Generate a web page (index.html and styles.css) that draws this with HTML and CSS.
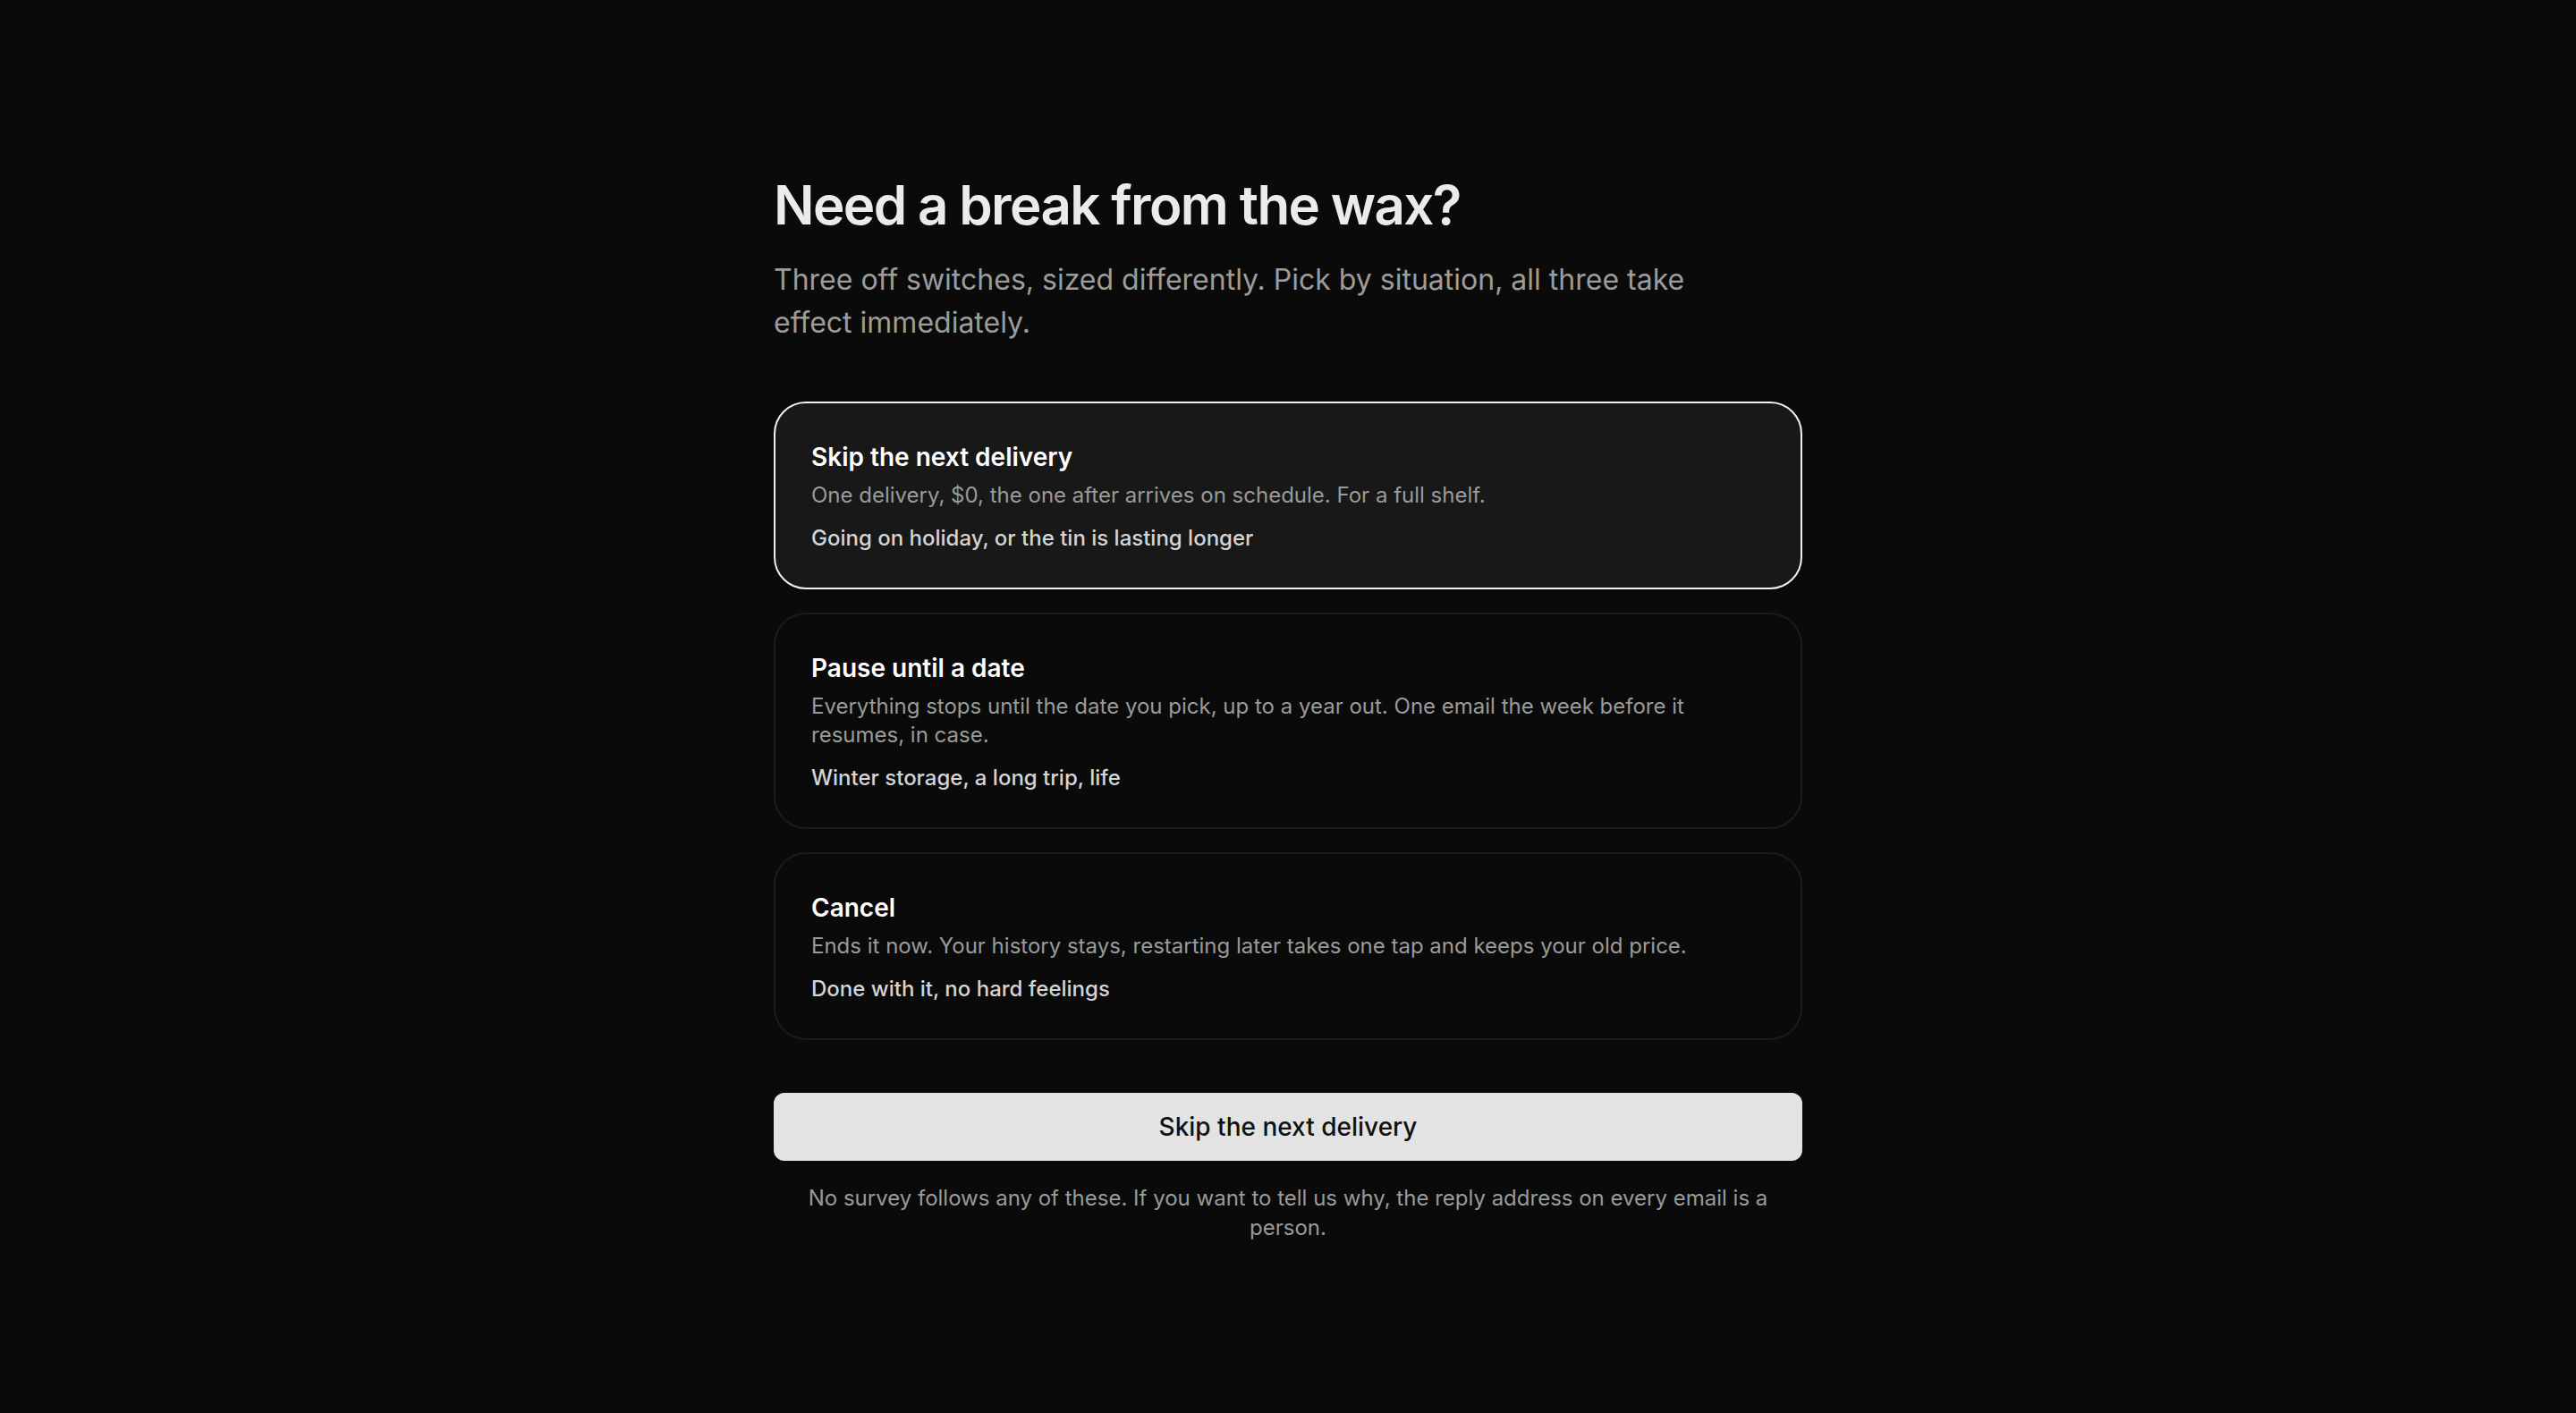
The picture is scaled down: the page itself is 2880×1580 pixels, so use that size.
FILE: index.html
```html
<!DOCTYPE html>
<html lang="en">
<head>
    <meta charset="UTF-8">
    <title>Pause or skip</title>
    <link rel="stylesheet" href="styles.css">
</head>
<body>

    <main class="page">
        <h1 class="title">Need a break from the wax?</h1>
        <p class="lead">Three off switches, sized differently. Pick by situation, all three take effect immediately.</p>

        <div class="options">
            <div class="option selected">
                <div class="option-name">Skip the next delivery</div>
                <div class="option-desc">One delivery, $0, the one after arrives on schedule. For a full shelf.</div>
                <div class="option-when">Going on holiday, or the tin is lasting longer</div>
            </div>
            <div class="option">
                <div class="option-name">Pause until a date</div>
                <div class="option-desc">Everything stops until the date you pick, up to a year out. One email the week before it resumes, in case.</div>
                <div class="option-when">Winter storage, a long trip, life</div>
            </div>
            <div class="option">
                <div class="option-name">Cancel</div>
                <div class="option-desc">Ends it now. Your history stays, restarting later takes one tap and keeps your old price.</div>
                <div class="option-when">Done with it, no hard feelings</div>
            </div>
        </div>

        <button class="confirm">Skip the next delivery</button>
        <p class="note">No survey follows any of these. If you want to tell us why, the reply address on every email is a person.</p>
    </main>

</body>
</html>
```

FILE: styles.css
```css
html,body,h1,p{margin: 0; padding: 0;}
body{background: #0a0a0a; font-family: Inter, "Noto Sans", sans-serif; color: #e8e8e8;}

.page{
    width: 1150px;
    margin: 0 auto;
    padding-top: 193px;
}

.title{
    font-size: 60px;
    line-height: 72px;
    font-weight: 600;
    letter-spacing: -0.027em;
    color: #ebebeb;
}

.lead{
    margin-top: 24px;
    max-width: 1080px;
    font-size: 32px;
    line-height: 48px;
    color: #9c9c9c;
}

/* option list */
.options{
    display: flex;
    flex-direction: column;
    gap: 26px;
    margin-top: 64px;
}
.option{
    padding: 40px 40px 39px;
    border: 2px solid #1c1c1c;
    border-radius: 36px;
    background: #0a0a0a;
}
.option.selected{
    border-color: #f2f2f2;
    background: #181818;
}
.option-name{
    font-size: 28px;
    line-height: 40px;
    font-weight: 600;
    color: #fff;
}
.option-desc{
    margin-top: 7px;
    font-size: 24px;
    line-height: 32px;
    color: #9a9a9a;
}
.option-when{
    margin-top: 16px;
    font-size: 24px;
    line-height: 32px;
    font-weight: 500;
    color: #d4d4d4;
}

.confirm{
    display: block;
    width: 100%;
    margin-top: 59px;
    padding: 19px 0;
    border: 0;
    border-radius: 12px;
    background: #e3e3e3;
    font-family: inherit;
    font-size: 28px;
    line-height: 38px;
    font-weight: 500;
    color: #111;
}

.note{
    margin-top: 25px;
    padding: 0 30px;
    text-align: center;
    font-size: 24px;
    line-height: 33px;
    color: #9a9a9a;
}
```
